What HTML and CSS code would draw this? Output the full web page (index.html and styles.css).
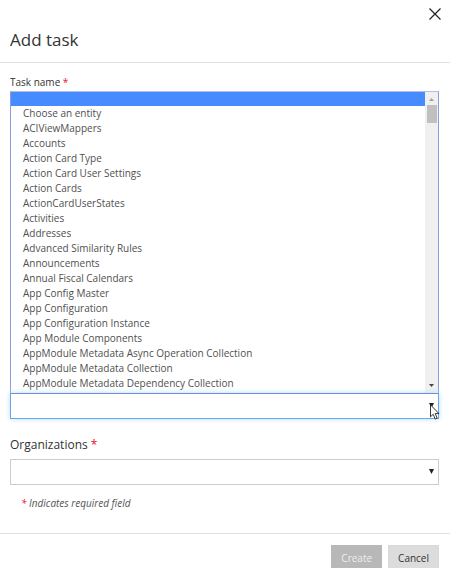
FILE: index.html
```html
<!DOCTYPE html>
<html lang="en">
<head>
<meta charset="utf-8">
<title>Add task</title>
<link rel="stylesheet" href="styles.css">
</head>
<body>
<form class="dialog">
  <header class="dialog-header">
    <h1 class="dialog-title">Add task</h1>
    <button class="close" type="button" aria-label="Close">
      <svg width="12" height="12" viewBox="0 0 12 12"><path d="M.5.5l11 11M11.5.5l-11 11" fill="none" stroke="#222" stroke-width="1.2"/></svg>
    </button>
  </header>
  <main class="dialog-body">
    <label class="label" for="task">Task name <span class="required">*</span></label>
    <div class="popup">
      <ul class="options" role="listbox" aria-label="Task name">
        <li class="option selected" role="option" aria-selected="true"></li>
        <li class="option" role="option">Choose an entity</li>
        <li class="option" role="option">ACIViewMappers</li>
        <li class="option" role="option">Accounts</li>
        <li class="option" role="option">Action Card Type</li>
        <li class="option" role="option">Action Card User Settings</li>
        <li class="option" role="option">Action Cards</li>
        <li class="option" role="option">ActionCardUserStates</li>
        <li class="option" role="option">Activities</li>
        <li class="option" role="option">Addresses</li>
        <li class="option" role="option">Advanced Similarity Rules</li>
        <li class="option" role="option">Announcements</li>
        <li class="option" role="option">Annual Fiscal Calendars</li>
        <li class="option" role="option">App Config Master</li>
        <li class="option" role="option">App Configuration</li>
        <li class="option" role="option">App Configuration Instance</li>
        <li class="option" role="option">App Module Components</li>
        <li class="option" role="option">AppModule Metadata Async Operation Collection</li>
        <li class="option" role="option">AppModule Metadata Collection</li>
        <li class="option" role="option">AppModule Metadata Dependency Collection</li>
      </ul>
      <div class="scrollbar" aria-hidden="true">
        <svg class="scroll-arrow" width="13" height="13" viewBox="0 0 13 13"><path d="M4 9h5L6.500 6z" fill="#a0a0a0"/></svg>
        <div class="thumb"></div>
        <svg class="scroll-arrow" width="13" height="13" viewBox="0 0 13 13"><path d="M4 4h5L6.500 7z" fill="#444"/></svg>
      </div>
    </div>
    <div class="field open">
      <select class="select" id="task"><option></option></select>
      <svg class="arrow" width="5" height="5" viewBox="0 0 5 5"><path d="M0 0h5L2.500 5z" fill="#222"/></svg>
      <svg class="cursor" width="10" height="16" viewBox="0 0 10 16"><path d="M.5.800v12l2.700-2.500 2 4.800 2-.900-2-4.600h3.700z" fill="#fff" stroke="#222" stroke-width=".9"/></svg>
    </div>
    <label class="label large" for="organizations">Organizations <span class="required">*</span></label>
    <div class="field">
      <select class="select" id="organizations"><option></option></select>
      <svg class="arrow" width="5" height="5" viewBox="0 0 5 5"><path d="M0 0h5L2.500 5z" fill="#222"/></svg>
    </div>
    <p class="note"><span class="required">*</span> Indicates required field</p>
  </main>
  <footer class="dialog-footer">
    <button class="button create" type="submit" disabled>Create</button>
    <button class="button" type="button">Cancel</button>
  </footer>
</form>
</body>
</html>
```
FILE: styles.css
```css
* { box-sizing: border-box; }
body {
  margin: 0;
  overflow: hidden;
  background: #fff;
  color: #333;
  font: 10px/15px "Open Sans", "Noto Sans", sans-serif;
}
.dialog-header {
  display: flex;
  justify-content: space-between;
  align-items: flex-start;
  padding: 8px 9px 10px 10px;
  border-bottom: 1px solid #e2e2e2;
}
.dialog-title {
  margin: 20px 0 0;
  font-size: 17px;
  line-height: 24px;
  font-weight: 400;
}
.close {
  display: flex;
  padding: 0;
  border: 0;
  background: none;
}
.dialog-body { padding: 11px 11px 22px 10px; }
.label {
  display: block;
  line-height: 17px;
}
.label.large {
  margin-top: 16px;
  font-size: 12px;
  line-height: 20px;
  margin-bottom: 4px;
}
.required { color: #e81123; }
.popup {
  display: flex;
  border: 1px solid #8e9dda;
  border-top-color: #b0bde6;
  border-bottom: 0;
}
.options {
  flex: 1;
  margin: 0;
  padding: 0 0 2px;
  list-style: none;
  color: #505050;
}
.option {
  height: 15px;
  padding-left: 12px;
}
.option.selected {
  height: 14px;
  background: #468bff;
}
.scrollbar {
  display: flex;
  flex-direction: column;
  align-items: center;
  width: 13px;
  background: #f0f0f0;
}
.thumb {
  width: 10px;
  height: 18px;
  margin-bottom: auto;
  background: #c0c0c0;
}
.field { position: relative; }
.select {
  display: block;
  width: 100%;
  height: 26px;
  border: 1px solid #ccc;
  border-radius: 0;
  background: #fff;
  appearance: none;
  outline: 0;
}
.open .select {
  border-color: #66a8e6;
  border-top-color: #6b91db;
  box-shadow: 0 0 5px #b5dcf8;
}
.arrow {
  position: absolute;
  top: 10px;
  right: 5px;
}
.cursor {
  position: absolute;
  top: 11px;
  right: -1px;
}
.note {
  margin: 11px 0 0 11px;
  color: #555;
  font-style: italic;
}
.dialog-footer {
  display: flex;
  justify-content: flex-end;
  gap: 6px;
  padding: 11px;
  border-top: 1px solid #e2e2e2;
}
.button {
  height: 27px;
  padding: 0 9px;
  border: 1px solid #d8d8d8;
  background: #dcdcdc;
  color: #333;
  font: inherit;
}
.button.create {
  border-color: #b8b8b8;
  background: #b8b8b8;
  color: #eee;
}
```
